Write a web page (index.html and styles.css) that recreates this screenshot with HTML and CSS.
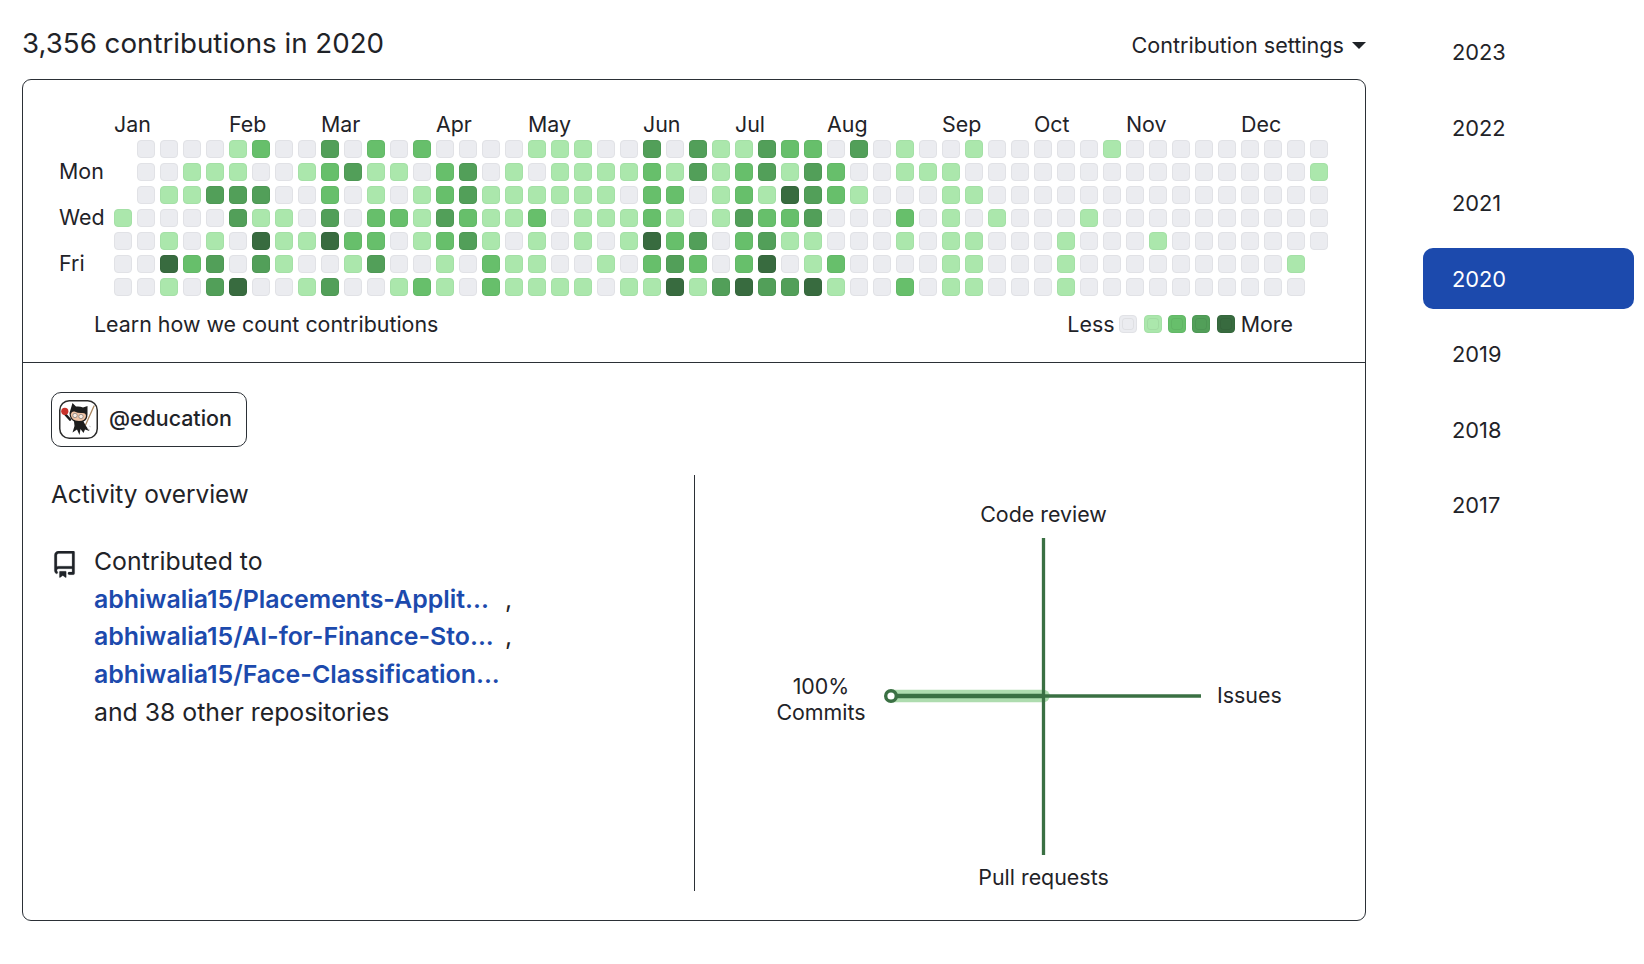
FILE: index.html
```html
<!DOCTYPE html>
<html lang="en">
<head>
<meta charset="utf-8">
<title>Contributions in 2020</title>
<link rel="stylesheet" href="styles.css">
</head>
<body>
<div class="page">
  <main class="main">
    <header class="head">
      <h2 class="title">3,356 contributions in 2020</h2>
      <div class="settings">Contribution settings<span class="caret"></span></div>
    </header>
    <section class="card">
      <div class="graph">
        <div class="graph-body">
          <div class="days">
            <span></span><span>Mon</span><span></span><span>Wed</span><span></span><span>Fri</span><span></span>
          </div>
          <div class="calendar">
            <div class="months">
              <span class="s5">Jan</span><span class="s4">Feb</span><span class="s5">Mar</span><span class="s4">Apr</span><span class="s5">May</span><span class="s4">Jun</span><span class="s4">Jul</span><span class="s5">Aug</span><span class="s4">Sep</span><span class="s4">Oct</span><span class="s5">Nov</span><span class="s4">Dec</span>
            </div>
            <div class="cells">
              <!-- row 0 -->
              <b></b><i></i><i></i><i></i><i></i><i class="a"></i><i class="c"></i><i></i><i></i><i class="d"></i><i></i><i class="c"></i><i></i><i class="c"></i><i></i><i></i><i></i><i></i><i class="a"></i><i class="a"></i><i class="a"></i><i></i><i></i><i class="d"></i><i></i><i class="d"></i><i class="a"></i><i class="a"></i><i class="d"></i><i class="c"></i><i class="c"></i><i></i><i class="d"></i><i></i><i class="a"></i><i></i><i></i><i class="a"></i><i></i><i></i><i></i><i></i><i></i><i class="a"></i><i></i><i></i><i></i><i></i><i></i><i></i><i></i><i></i><i></i>
              <!-- row 1 -->
              <b></b><i></i><i></i><i class="a"></i><i class="a"></i><i class="a"></i><i></i><i></i><i class="a"></i><i class="c"></i><i class="d"></i><i class="a"></i><i class="a"></i><i></i><i class="c"></i><i class="d"></i><i></i><i class="a"></i><i></i><i class="a"></i><i class="a"></i><i class="a"></i><i class="a"></i><i class="c"></i><i class="a"></i><i class="d"></i><i class="a"></i><i class="c"></i><i class="d"></i><i class="a"></i><i class="d"></i><i class="c"></i><i></i><i></i><i class="a"></i><i class="a"></i><i class="a"></i><i></i><i></i><i></i><i></i><i></i><i></i><i></i><i></i><i></i><i></i><i></i><i></i><i></i><i></i><i></i><i class="a"></i>
              <!-- row 2 -->
              <b></b><i></i><i class="a"></i><i class="a"></i><i class="d"></i><i class="d"></i><i class="d"></i><i></i><i></i><i class="c"></i><i></i><i class="a"></i><i></i><i class="a"></i><i class="c"></i><i class="d"></i><i class="a"></i><i class="a"></i><i class="a"></i><i class="a"></i><i class="a"></i><i class="a"></i><i></i><i class="c"></i><i class="c"></i><i></i><i class="a"></i><i class="c"></i><i class="a"></i><i class="e"></i><i class="d"></i><i class="c"></i><i class="a"></i><i></i><i></i><i></i><i class="a"></i><i class="a"></i><i></i><i></i><i></i><i></i><i></i><i></i><i></i><i></i><i></i><i></i><i></i><i></i><i></i><i></i><i></i>
              <!-- row 3 -->
              <i class="a"></i><i></i><i></i><i></i><i></i><i class="d"></i><i class="a"></i><i class="a"></i><i></i><i class="d"></i><i></i><i class="c"></i><i class="c"></i><i class="a"></i><i class="d"></i><i class="c"></i><i class="a"></i><i class="a"></i><i class="c"></i><i></i><i class="a"></i><i class="a"></i><i class="a"></i><i class="c"></i><i class="a"></i><i></i><i class="a"></i><i class="d"></i><i class="c"></i><i class="c"></i><i class="d"></i><i></i><i></i><i></i><i class="c"></i><i></i><i class="a"></i><i></i><i class="a"></i><i></i><i></i><i></i><i class="a"></i><i></i><i></i><i></i><i></i><i></i><i></i><i></i><i></i><i></i><i></i>
              <!-- row 4 -->
              <i></i><i></i><i class="a"></i><i></i><i class="a"></i><i></i><i class="e"></i><i class="a"></i><i class="a"></i><i class="e"></i><i class="c"></i><i class="c"></i><i></i><i class="a"></i><i class="c"></i><i class="d"></i><i class="a"></i><i></i><i class="a"></i><i></i><i class="a"></i><i></i><i class="a"></i><i class="e"></i><i class="c"></i><i class="d"></i><i></i><i class="c"></i><i class="d"></i><i class="a"></i><i class="a"></i><i></i><i></i><i></i><i class="a"></i><i></i><i class="a"></i><i class="a"></i><i></i><i></i><i></i><i class="a"></i><i></i><i></i><i></i><i class="a"></i><i></i><i></i><i></i><i></i><i></i><i></i><i></i>
              <!-- row 5 -->
              <i></i><i></i><i class="e"></i><i class="c"></i><i class="d"></i><i></i><i class="d"></i><i class="a"></i><i></i><i></i><i class="a"></i><i class="d"></i><i></i><i></i><i class="a"></i><i></i><i class="c"></i><i class="a"></i><i class="a"></i><i></i><i></i><i class="a"></i><i></i><i class="c"></i><i class="d"></i><i class="c"></i><i></i><i class="c"></i><i class="e"></i><i></i><i class="a"></i><i class="c"></i><i></i><i></i><i></i><i></i><i class="a"></i><i class="a"></i><i></i><i></i><i></i><i class="a"></i><i></i><i></i><i></i><i></i><i></i><i></i><i></i><i></i><i></i><i class="a"></i><b></b>
              <!-- row 6 -->
              <i></i><i></i><i class="a"></i><i></i><i class="d"></i><i class="e"></i><i></i><i></i><i class="a"></i><i class="d"></i><i></i><i></i><i class="a"></i><i class="c"></i><i class="a"></i><i></i><i class="c"></i><i class="a"></i><i class="a"></i><i class="a"></i><i class="a"></i><i></i><i class="a"></i><i class="a"></i><i class="e"></i><i class="a"></i><i class="d"></i><i class="e"></i><i class="d"></i><i class="d"></i><i class="e"></i><i class="a"></i><i></i><i></i><i class="c"></i><i></i><i class="a"></i><i class="a"></i><i></i><i></i><i></i><i class="a"></i><i></i><i></i><i></i><i></i><i></i><i></i><i></i><i></i><i></i><i></i><b></b>
            </div>
          </div>
        </div>
        <div class="graph-foot">
          <span>Learn how we count contributions</span>
          <div class="legend">
            <span class="legend-less">Less</span>
            <i></i><i class="a"></i><i class="c"></i><i class="d"></i><i class="e"></i>
            <span class="legend-more">More</span>
          </div>
        </div>
      </div>
      <div class="detail">
        <div class="org">
          <svg class="org-avatar" viewBox="0 0 39 39" aria-hidden="true">
            <rect x="0.75" y="0.75" width="37.5" height="37.5" rx="9.5" fill="#fff" stroke="#2b2b2b" stroke-width="1.5"/>
            <path d="M26.500 25 35 6" stroke="#a9865f" stroke-width="1.300" stroke-linecap="round"/>
            <path d="M6 14 11 19.500" stroke="#1d1d1d" stroke-width="2.600" stroke-linecap="round"/>
            <circle cx="5.800" cy="11.300" r="3.600" fill="#c9312a"/>
            <path d="M13.500 3 17 6.500Q21 6 24 7.500L28.500 6 28.500 14Q28.500 20 24.500 21.500L27 26 30.500 31 26 29.500 24.500 33 21.500 29 20.500 35 18 29.500 13.500 32.500 15.500 26 15 21.500Q10.500 19 10.500 13Z" fill="#1d1d1d"/>
            <path d="M11.800 14.500Q12.500 11 15.500 11.500 19.500 13.500 23.500 13 27 13 27 16 26.500 21 20 21 12 20.500 11.800 14.500Z" fill="#efc3a4"/>
            <circle cx="16" cy="15.500" r="2.200" fill="#f7ece2" stroke="#666" stroke-width=".6"/>
            <circle cx="22" cy="16.500" r="2.200" fill="#f7ece2" stroke="#666" stroke-width=".6"/>
            <path d="M28 28.500 31 30M30 26 32 27" stroke="#bbb" stroke-width=".6"/>
          </svg>
          <span class="org-name">@education</span>
        </div>
        <div class="overview">
          <div class="overview-left">
            <h3 class="overview-title">Activity overview</h3>
            <div class="contrib">
              <svg class="repo-icon" viewBox="0 0 16 16" aria-hidden="true"><path d="M2 2.5A2.5 2.5 0 0 1 4.500 0h8.750a.75.75 0 0 1 .75.75v12.500a.75.75 0 0 1-.75.75h-2.500a.75.75 0 0 1 0-1.500h1.750v-2h-8a1 1 0 0 0-.714 1.700.75.75 0 1 1-1.072 1.050A2.495 2.495 0 0 1 2 11.500Zm10.500-1h-8a1 1 0 0 0-1 1v6.708A2.486 2.486 0 0 1 4.500 9h8ZM5 12.250a.25.25 0 0 1 .25-.25h3.500a.25.25 0 0 1 .25.25v3.250a.25.25 0 0 1-.4.2l-1.450-1.087a.249.249 0 0 0-.3 0L5.400 15.700a.25.25 0 0 1-.4-.2Z"/></svg>
              <div class="contrib-text">
                <div>Contributed to</div>
                <div class="repo-line"><a class="repo" href="#">abhiwalia15/Placements-Applit...</a><span class="comma">,</span></div>
                <div class="repo-line"><a class="repo" href="#">abhiwalia15/AI-for-Finance-Sto...</a><span class="comma">,</span></div>
                <div class="repo-line"><a class="repo" href="#">abhiwalia15/Face-Classification...</a></div>
                <div>and 38 other repositories</div>
              </div>
            </div>
          </div>
          <div class="overview-right">
            <svg class="radar" viewBox="0 0 644 416" aria-label="Activity radar chart">
              <path class="radar-band" d="M196 221H348.500"/>
              <path class="radar-axis" d="M348.500 63V380"/>
              <path class="radar-axis" d="M196 221H506"/>
              <path class="radar-value" d="M196 221H348.500"/>
              <circle class="radar-dot" cx="196" cy="221" r="5.300"/>
              <text class="radar-label" x="348.500" y="47" text-anchor="middle">Code review</text>
              <text class="radar-label" x="348.500" y="410" text-anchor="middle">Pull requests</text>
              <text class="radar-label" x="522" y="228" text-anchor="start">Issues</text>
              <text class="radar-label" x="126" y="219" text-anchor="middle">100%</text>
              <text class="radar-label" x="126" y="245" text-anchor="middle">Commits</text>
            </svg>
          </div>
        </div>
      </div>
    </section>
  </main>
  <nav class="years">
    <a class="year" href="#">2023</a>
    <a class="year" href="#">2022</a>
    <a class="year" href="#">2021</a>
    <a class="year is-active" href="#">2020</a>
    <a class="year" href="#">2019</a>
    <a class="year" href="#">2018</a>
    <a class="year" href="#">2017</a>
  </nav>
</div>
</body>
</html>
```

FILE: styles.css
```css
* { box-sizing: border-box; }
html, body { margin: 0; padding: 0; background: #fff; }
body {
  font-family: Inter, "Noto Sans", "Liberation Sans", sans-serif;
  color: #1f2328;
  font-size: 21.400px;
  overflow: hidden;
}
.page { display: flex; align-items: flex-start; width: 1644px; height: 964px; padding-left: 22px; }
.main { width: 1344px; flex: none; }

.head { height: 79px; display: flex; justify-content: space-between; align-items: flex-start; }
.title { margin: 24px 0 0; font-size: 27.700px; font-weight: 400; line-height: 38px; }
.settings { display: flex; align-items: center; margin-top: 31px; line-height: 28px; font-size: 21.600px; }
.caret {
  width: 0; height: 0; margin-left: 8px;
  border-left: 7px solid transparent; border-right: 7px solid transparent; border-top: 7px solid #1f2328;
}

.card { height: 842px; border: 1px solid #2b3036; border-radius: 9px; }

.graph { height: 283px; padding: 32px 0 0 37px; border-bottom: 1px solid #2b3036; }
.graph-body { display: flex; }
.days { display: grid; width: 54px; margin-top: 27px; grid-template-rows: repeat(7, 18px); row-gap: 5px; }
.days span { line-height: 18px; height: 18px; white-space: nowrap; margin-left: -1px; }
.months { display: grid; grid-template-columns: repeat(53, 18px); column-gap: 5px; height: 28px; line-height: 24px; }
.months span { white-space: nowrap; }
.s4 { grid-column: span 4; }
.s5 { grid-column: span 5; }
.cells { display: grid; grid-template-columns: repeat(53, 18px); grid-auto-rows: 18px; gap: 5px; }
.cells i, .legend i {
  display: block; width: 18px; height: 18px; border-radius: 4px;
  background: #ebecf0; border: 1px solid #e1e2e6;
}
.cells b { display: block; }
.cells i.a, .legend i.a { background: #abe7ac; border-color: #a4e0a6; }
.cells i.c, .legend i.c { background: #67bf6b; border-color: #62b867; }
.cells i.d, .legend i.d { background: #529f59; border-color: #4e9855; }
.cells i.e, .legend i.e { background: #386b3f; border-color: #35673c; }

.graph-foot { display: flex; justify-content: space-between; align-items: center; margin: 16px 0 0 34px; height: 24px; width: 1199px; }
.legend { display: flex; align-items: center; }
.legend i { margin-right: 6.300px; position: relative; }
.legend-less { margin-right: 5px; }
.legend-more { margin-left: -0.300px; }
.legend i::after { content: ""; position: absolute; inset: 2px; border: 1px solid rgba(0, 0, 0, .05); border-radius: 3px; }

.detail { padding: 29px 0 0 28px; }
.org {
  display: flex; align-items: center; width: 196px; height: 55px; padding-left: 7px;
  border: 1px solid #2b3036; border-radius: 10px; font-weight: 500;
}
.org-avatar { width: 39px; height: 39px; margin-right: 11px; flex: none; }
.org-name { margin-bottom: 3px; }

.overview { display: flex; margin-top: 28px; height: 416px; }
.overview-left { width: 643px; flex: none; padding-top: 3px; }
.overview-title { margin: 0; font-size: 24.400px; font-weight: 400; line-height: 32px; }
.contrib { display: flex; margin-top: 33px; font-size: 24.800px; line-height: 37.700px; }
.repo-icon { width: 27px; height: 27px; margin: 8px 16px 0 0; flex: none; fill: #1f2328; stroke: #1f2328; stroke-width: .15px; }
.repo-line { display: flex; }
.repo { display: block; width: 411px; color: #1c4aad; font-weight: 600; font-size: 24.900px; text-decoration: none; white-space: nowrap; }

.overview-right { flex: 1; border-left: 1px solid #2b3036; }
.radar { display: block; width: 644px; height: 416px; overflow: visible; }
.radar-band { stroke: #aedcaf; stroke-width: 12.500px; stroke-linecap: round; fill: none; }
.radar-axis { stroke: #3a7043; stroke-width: 3.300px; fill: none; }
.radar-value { stroke: #3a7043; stroke-width: 4.500px; fill: none; }
.radar-dot { fill: #fff; stroke: #3a7043; stroke-width: 3.400px; }
.radar-label { font-size: 21.400px; fill: #1f2328; }

.years { width: 211px; margin-left: 57px; padding-top: 21.500px; display: flex; flex-direction: column; gap: 14.500px; font-size: 21.800px; }
.year {
  display: flex; align-items: center; height: 61px; padding-left: 29px;
  border-radius: 10px; color: #1f2328; text-decoration: none;
}
.year.is-active { background: #1c4aad; color: #fff; }
```
